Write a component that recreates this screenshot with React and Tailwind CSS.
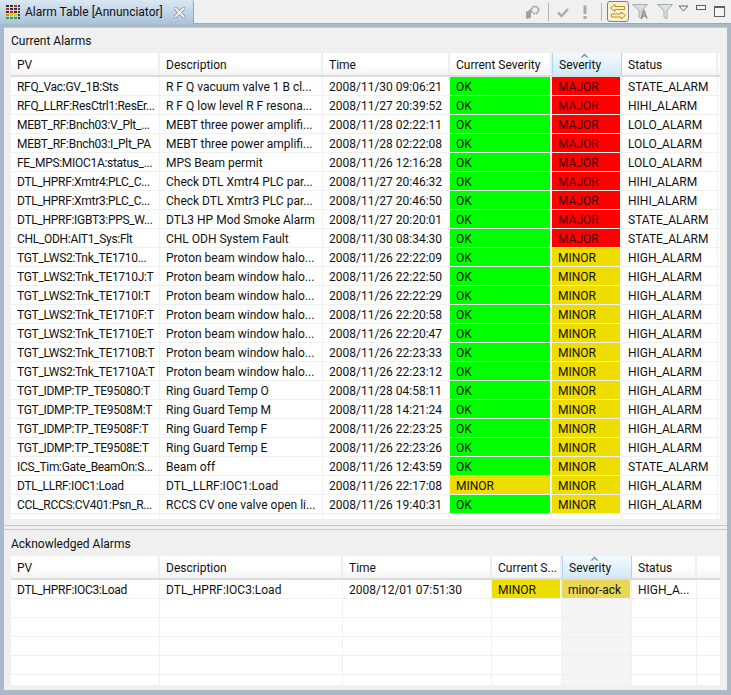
const FONT = "font-['Roboto',sans-serif]";

const CURRENT = [
  ["RFQ_Vac:GV_1B:Sts", "R F Q vacuum valve 1 B cl...", "2008/11/30 09:06:21", "OK", "MAJOR", "STATE_ALARM"],
  ["RFQ_LLRF:ResCtrl1:ResEr...", "R F Q low level R F resona...", "2008/11/27 20:39:52", "OK", "MAJOR", "HIHI_ALARM"],
  ["MEBT_RF:Bnch03:V_Plt_...", "MEBT three power amplifi...", "2008/11/28 02:22:11", "OK", "MAJOR", "LOLO_ALARM"],
  ["MEBT_RF:Bnch03:I_Plt_PA", "MEBT three power amplifi...", "2008/11/28 02:22:08", "OK", "MAJOR", "LOLO_ALARM"],
  ["FE_MPS:MIOC1A:status_...", "MPS Beam permit", "2008/11/26 12:16:28", "OK", "MAJOR", "LOLO_ALARM"],
  ["DTL_HPRF:Xmtr4:PLC_C...", "Check DTL Xmtr4 PLC par...", "2008/11/27 20:46:32", "OK", "MAJOR", "HIHI_ALARM"],
  ["DTL_HPRF:Xmtr3:PLC_C...", "Check DTL Xmtr3 PLC par...", "2008/11/27 20:46:50", "OK", "MAJOR", "HIHI_ALARM"],
  ["DTL_HPRF:IGBT3:PPS_W...", "DTL3 HP Mod Smoke Alarm", "2008/11/27 20:20:01", "OK", "MAJOR", "STATE_ALARM"],
  ["CHL_ODH:AIT1_Sys:Flt", "CHL ODH System Fault", "2008/11/30 08:34:30", "OK", "MAJOR", "STATE_ALARM"],
  ["TGT_LWS2:Tnk_TE1710...", "Proton beam window halo...", "2008/11/26 22:22:09", "OK", "MINOR", "HIGH_ALARM"],
  ["TGT_LWS2:Tnk_TE1710J:T", "Proton beam window halo...", "2008/11/26 22:22:50", "OK", "MINOR", "HIGH_ALARM"],
  ["TGT_LWS2:Tnk_TE1710I:T", "Proton beam window halo...", "2008/11/26 22:22:29", "OK", "MINOR", "HIGH_ALARM"],
  ["TGT_LWS2:Tnk_TE1710F:T", "Proton beam window halo...", "2008/11/26 22:20:58", "OK", "MINOR", "HIGH_ALARM"],
  ["TGT_LWS2:Tnk_TE1710E:T", "Proton beam window halo...", "2008/11/26 22:20:47", "OK", "MINOR", "HIGH_ALARM"],
  ["TGT_LWS2:Tnk_TE1710B:T", "Proton beam window halo...", "2008/11/26 22:23:33", "OK", "MINOR", "HIGH_ALARM"],
  ["TGT_LWS2:Tnk_TE1710A:T", "Proton beam window halo...", "2008/11/26 22:23:12", "OK", "MINOR", "HIGH_ALARM"],
  ["TGT_IDMP:TP_TE9508O:T", "Ring Guard Temp O", "2008/11/28 04:58:11", "OK", "MINOR", "HIGH_ALARM"],
  ["TGT_IDMP:TP_TE9508M:T", "Ring Guard Temp M", "2008/11/28 14:21:24", "OK", "MINOR", "HIGH_ALARM"],
  ["TGT_IDMP:TP_TE9508F:T", "Ring Guard Temp F", "2008/11/26 22:23:25", "OK", "MINOR", "HIGH_ALARM"],
  ["TGT_IDMP:TP_TE9508E:T", "Ring Guard Temp E", "2008/11/26 22:23:26", "OK", "MINOR", "HIGH_ALARM"],
  ["ICS_Tim:Gate_BeamOn:S...", "Beam off", "2008/11/26 12:43:59", "OK", "MINOR", "STATE_ALARM"],
  ["DTL_LLRF:IOC1:Load", "DTL_LLRF:IOC1:Load", "2008/11/26 22:17:08", "MINOR", "MINOR", "HIGH_ALARM"],
  ["CCL_RCCS:CV401:Psn_R...", "RCCS CV one valve open li...", "2008/11/26 19:40:31", "OK", "MINOR", "HIGH_ALARM"],
];

const ACKED = [
  ["DTL_HPRF:IOC3:Load", "DTL_HPRF:IOC3:Load", "2008/12/01 07:51:30", "MINOR", "minor-ack", "HIGH_A..."],
];

const HEADERS_TOP = ["PV", "Description", "Time", "Current Severity", "Severity", "Status"];
const HEADERS_BOTTOM = ["PV", "Description", "Time", "Current S...", "Severity", "Status"];

// column widths incl. the 1px grid line on the right
const WIDTHS_TOP = ["w-[149px]", "w-[163px]", "w-[127px]", "w-[102px]", "w-[70px]", "w-[96px]"];
const WIDTHS_BOTTOM = ["w-[149px]", "w-[183px]", "w-[149px]", "w-[70px]", "w-[70px]", "w-[65px]"];

function severityClass(value) {
  if (value === "OK") return "bg-[#00ff00]";
  if (value === "MAJOR") return "bg-[#ff0000] text-[#3a0000]";
  if (value === "MINOR") return "bg-[#eedd00]";
  if (value === "minor-ack") return "bg-[#e7d957]";
  return "";
}

function Cell({ width, value, colored, shaded, tight }) {
  return (
    <div className={`${width} shrink-0 h-full border-r border-[#f0f0f0] ${shaded ? "bg-[#f5f5f5]" : ""}`}>
      {value && (
        <div className={`h-full pl-[6px] mr-[1px] leading-[21px] whitespace-nowrap overflow-hidden ${tight ? "tracking-[-0.3px]" : ""} ${colored ? `pl-[5px] ${severityClass(value)}` : ""}`}>
          {value}
        </div>
      )}
    </div>
  );
}

function Row({ row, widths, shadeSeverity }) {
  return (
    <div className="flex h-[19px] shrink-0 border-b border-[#f0f0f0]">
      {widths.map((w, i) => (
        <Cell
          key={i}
          width={w}
          value={row ? row[i] : ""}
          colored={i === 3 || i === 4}
          shaded={shadeSeverity && i === 4}
          tight={i === 0}
        />
      ))}
      <div className="flex-1" />
    </div>
  );
}

function Header({ labels, widths }) {
  return (
    <div className="flex h-[24px] shrink-0 border-b-2 border-[#dcdcdc] bg-gradient-to-b from-white from-50% to-[#f3f3f3]">
      {labels.map((label, i) => {
        const sorted = i === 4;
        return (
          <div
            key={label}
            className={`${widths[i]} relative shrink-0 h-full pl-[6px] leading-[25px] whitespace-nowrap ${
              sorted
                ? "pl-[5px] border-x border-[#a8d8f2] bg-gradient-to-b from-[#f3fafe] to-[#d3e9f6]"
                : "border-r-2 border-[#eeeeee]"
            }`}
          >
            {sorted && (
              <svg className="absolute left-[27px] top-0" width="9" height="5" viewBox="0 0 9 5">
                <path d="M0.5 4.5 L4.5 0.5 L8.5 4.5 L6.5 4.5 L4.5 2.5 L2.5 4.5 Z" fill="#6f94ab" />
              </svg>
            )}
            {label}
          </div>
        );
      })}
      <div className="flex-1" />
    </div>
  );
}

function AlarmTable({ headers, widths, rows, emptyRows, shadeSeverity, grow }) {
  return (
    <div className={`mx-[7px] min-h-0 bg-white overflow-hidden flex flex-col ${grow}`}>
      <Header labels={headers} widths={widths} />
      {rows.map((row, i) => (
        <Row key={i} row={row} widths={widths} shadeSeverity={shadeSeverity} />
      ))}
      {Array.from({ length: emptyRows }).map((_, i) => (
        <Row key={i} widths={widths} shadeSeverity={shadeSeverity} />
      ))}
    </div>
  );
}

function TableIcon() {
  return (
    <svg width="16" height="16" viewBox="0 0 16 16" shapeRendering="crispEdges">
      {[1, 4, 7, 10, 13].map((y, i) => (
        <g key={y}>
          <rect x="1" y={y} width="3" height="2" fill={["#333", "#c22", "#333", "#d80", "#3a3"][i]} />
          <rect x="5" y={y} width="3" height="2" fill={["#333", "#333", "#c22", "#dc0", "#3a3"][i]} />
          <rect x="9" y={y} width="3" height="2" fill={["#c22", "#333", "#333", "#dc0", "#3a3"][i]} />
          <rect x="13" y={y} width="2" height="2" fill="#444" />
        </g>
      ))}
    </svg>
  );
}

function CloseIcon() {
  return (
    <svg width="11" height="11" viewBox="0 0 11 11">
      <path d="M1.5 1.5 L9.5 9.5 M9.5 1.5 L1.5 9.5" stroke="#8c949c" strokeWidth="3.4" strokeLinecap="square" />
      <path d="M1.5 1.5 L9.5 9.5 M9.5 1.5 L1.5 9.5" stroke="#f7f7f7" strokeWidth="1.8" strokeLinecap="square" />
    </svg>
  );
}

function Toolbar() {
  return (
    <div className="ml-auto flex items-center h-[23px] pr-[6px]">
      {/* disabled: configure alarm sound */}
      <svg width="16" height="16" viewBox="0 0 16 16">
        <path d="M1 8 L6 5 L6 14 L1 15 Z" fill="#a3a3a3" />
        <circle cx="10" cy="6" r="3.6" fill="none" stroke="#a3a3a3" strokeWidth="2" strokeDasharray="2 0.8" />
      </svg>
      <div className="w-[1px] h-[18px] bg-[#b5b5b5] ml-[7px]" />
      <svg className="ml-[6px]" width="16" height="16" viewBox="0 0 16 16">
        <path d="M3 8.5 L6.5 12 L13 5" fill="none" stroke="#a9a9a9" strokeWidth="2.4" />
      </svg>
      <svg className="ml-[6px]" width="16" height="16" viewBox="0 0 16 16">
        <path d="M8 1.5 V10" stroke="#a9a9a9" strokeWidth="3" />
        <rect x="6.5" y="12" width="3" height="3" fill="#a9a9a9" />
      </svg>
      <div className="w-[1px] h-[18px] bg-[#b5b5b5] ml-[8px]" />
      {/* toggled: swap tables */}
      <div className="ml-[5px] w-[22px] h-[21px] border border-[#808080] rounded-[3px] bg-[#f6f1dd] flex items-center justify-center">
        <svg width="18" height="18" viewBox="0 0 18 18">
          <path d="M1.5 5 L6 1.5 V3.5 H15.5 V6.5 H6 V8.5 Z" fill="#fff3c4" stroke="#c98a10" strokeWidth="1" />
          <path d="M16.5 12.5 L12 9 V11 H2.5 V14 H12 V16 Z" fill="#fff3c4" stroke="#c98a10" strokeWidth="1" />
        </svg>
      </div>
      <svg className="ml-[3px]" width="18" height="18" viewBox="0 0 18 18">
        <path d="M0.5 1.5 H15.5 L10 7.5 V16 L7 14 V7.5 Z" fill="#dcdcdc" stroke="#a6abab" strokeWidth="1" />
        <path d="M9.5 15.5 L12 8 L15 15.5 M10.5 13 H14" fill="none" stroke="#8a8f8f" strokeWidth="1.5" />
      </svg>
      <svg className="ml-[6px]" width="18" height="18" viewBox="0 0 18 18">
        <path d="M1.5 1.5 H16.5 L11 7.5 V16 L8 14 V7.5 Z" fill="#e2e2e2" stroke="#a6abab" strokeWidth="1" />
      </svg>
      <svg className="ml-[4px] mb-[7px]" width="11" height="7" viewBox="0 0 11 7">
        <path d="M1 1 H10 L5.5 6 Z" fill="#f4f4f4" stroke="#6a6a6a" strokeWidth="1" />
      </svg>
      <div className="ml-[7px] mb-[8px] w-[10px] h-[5px] border border-[#5f5f5f] bg-[#f4f4f4]" />
      <div className="ml-[8px] w-[11px] h-[11px] border border-[#5f5f5f] border-t-2 bg-[#f4f4f4]" />
    </div>
  );
}

export default function App() {
  return (
    <div className={`${FONT} w-[731px] h-[695px] text-[12px] text-[#111111] bg-[#a9b9c9] overflow-hidden`}>
      <div className="flex h-[24px] bg-[#f0f0f0] border-b border-[#a0a8b0]">
        <div className="w-[194px] h-[24px] flex items-center pl-[5px] bg-gradient-to-b from-[#dbe7f3] to-[#a9c3dc] border-r border-[#9aa3ad] rounded-tr-[3px]">
          <TableIcon />
          <span className="ml-[4px] whitespace-nowrap">Alarm Table [Annunciator]</span>
          <div className="ml-auto mr-[8px] flex">
            <CloseIcon />
          </div>
        </div>
        <Toolbar />
      </div>

      <div className="mx-[4px] mt-[3px] h-[663px] flex flex-col bg-[#f0f0f0]">
        <div className="h-[499px] shrink-0 flex flex-col border-y border-[#c8c8c8]">
          <div className="h-[25px] shrink-0 pl-[7px] pt-[4px] leading-[18px]">Current Alarms</div>
          <AlarmTable
            headers={HEADERS_TOP}
            widths={WIDTHS_TOP}
            rows={CURRENT}
            emptyRows={1}
            grow="flex-1 mb-[6px]"
          />
        </div>
        <div className="h-[3px] shrink-0 bg-[#f0f0f0]" />
        <div className="flex-1 min-h-0 flex flex-col border-t border-[#c8c8c8]">
          <div className="h-[26px] shrink-0 pl-[7px] pt-[5px] leading-[18px]">Acknowledged Alarms</div>
          <AlarmTable
            headers={HEADERS_BOTTOM}
            widths={WIDTHS_BOTTOM}
            rows={ACKED}
            emptyRows={5}
            shadeSeverity
            grow="flex-1 mb-[5px]"
          />
        </div>
      </div>
    </div>
  );
}
